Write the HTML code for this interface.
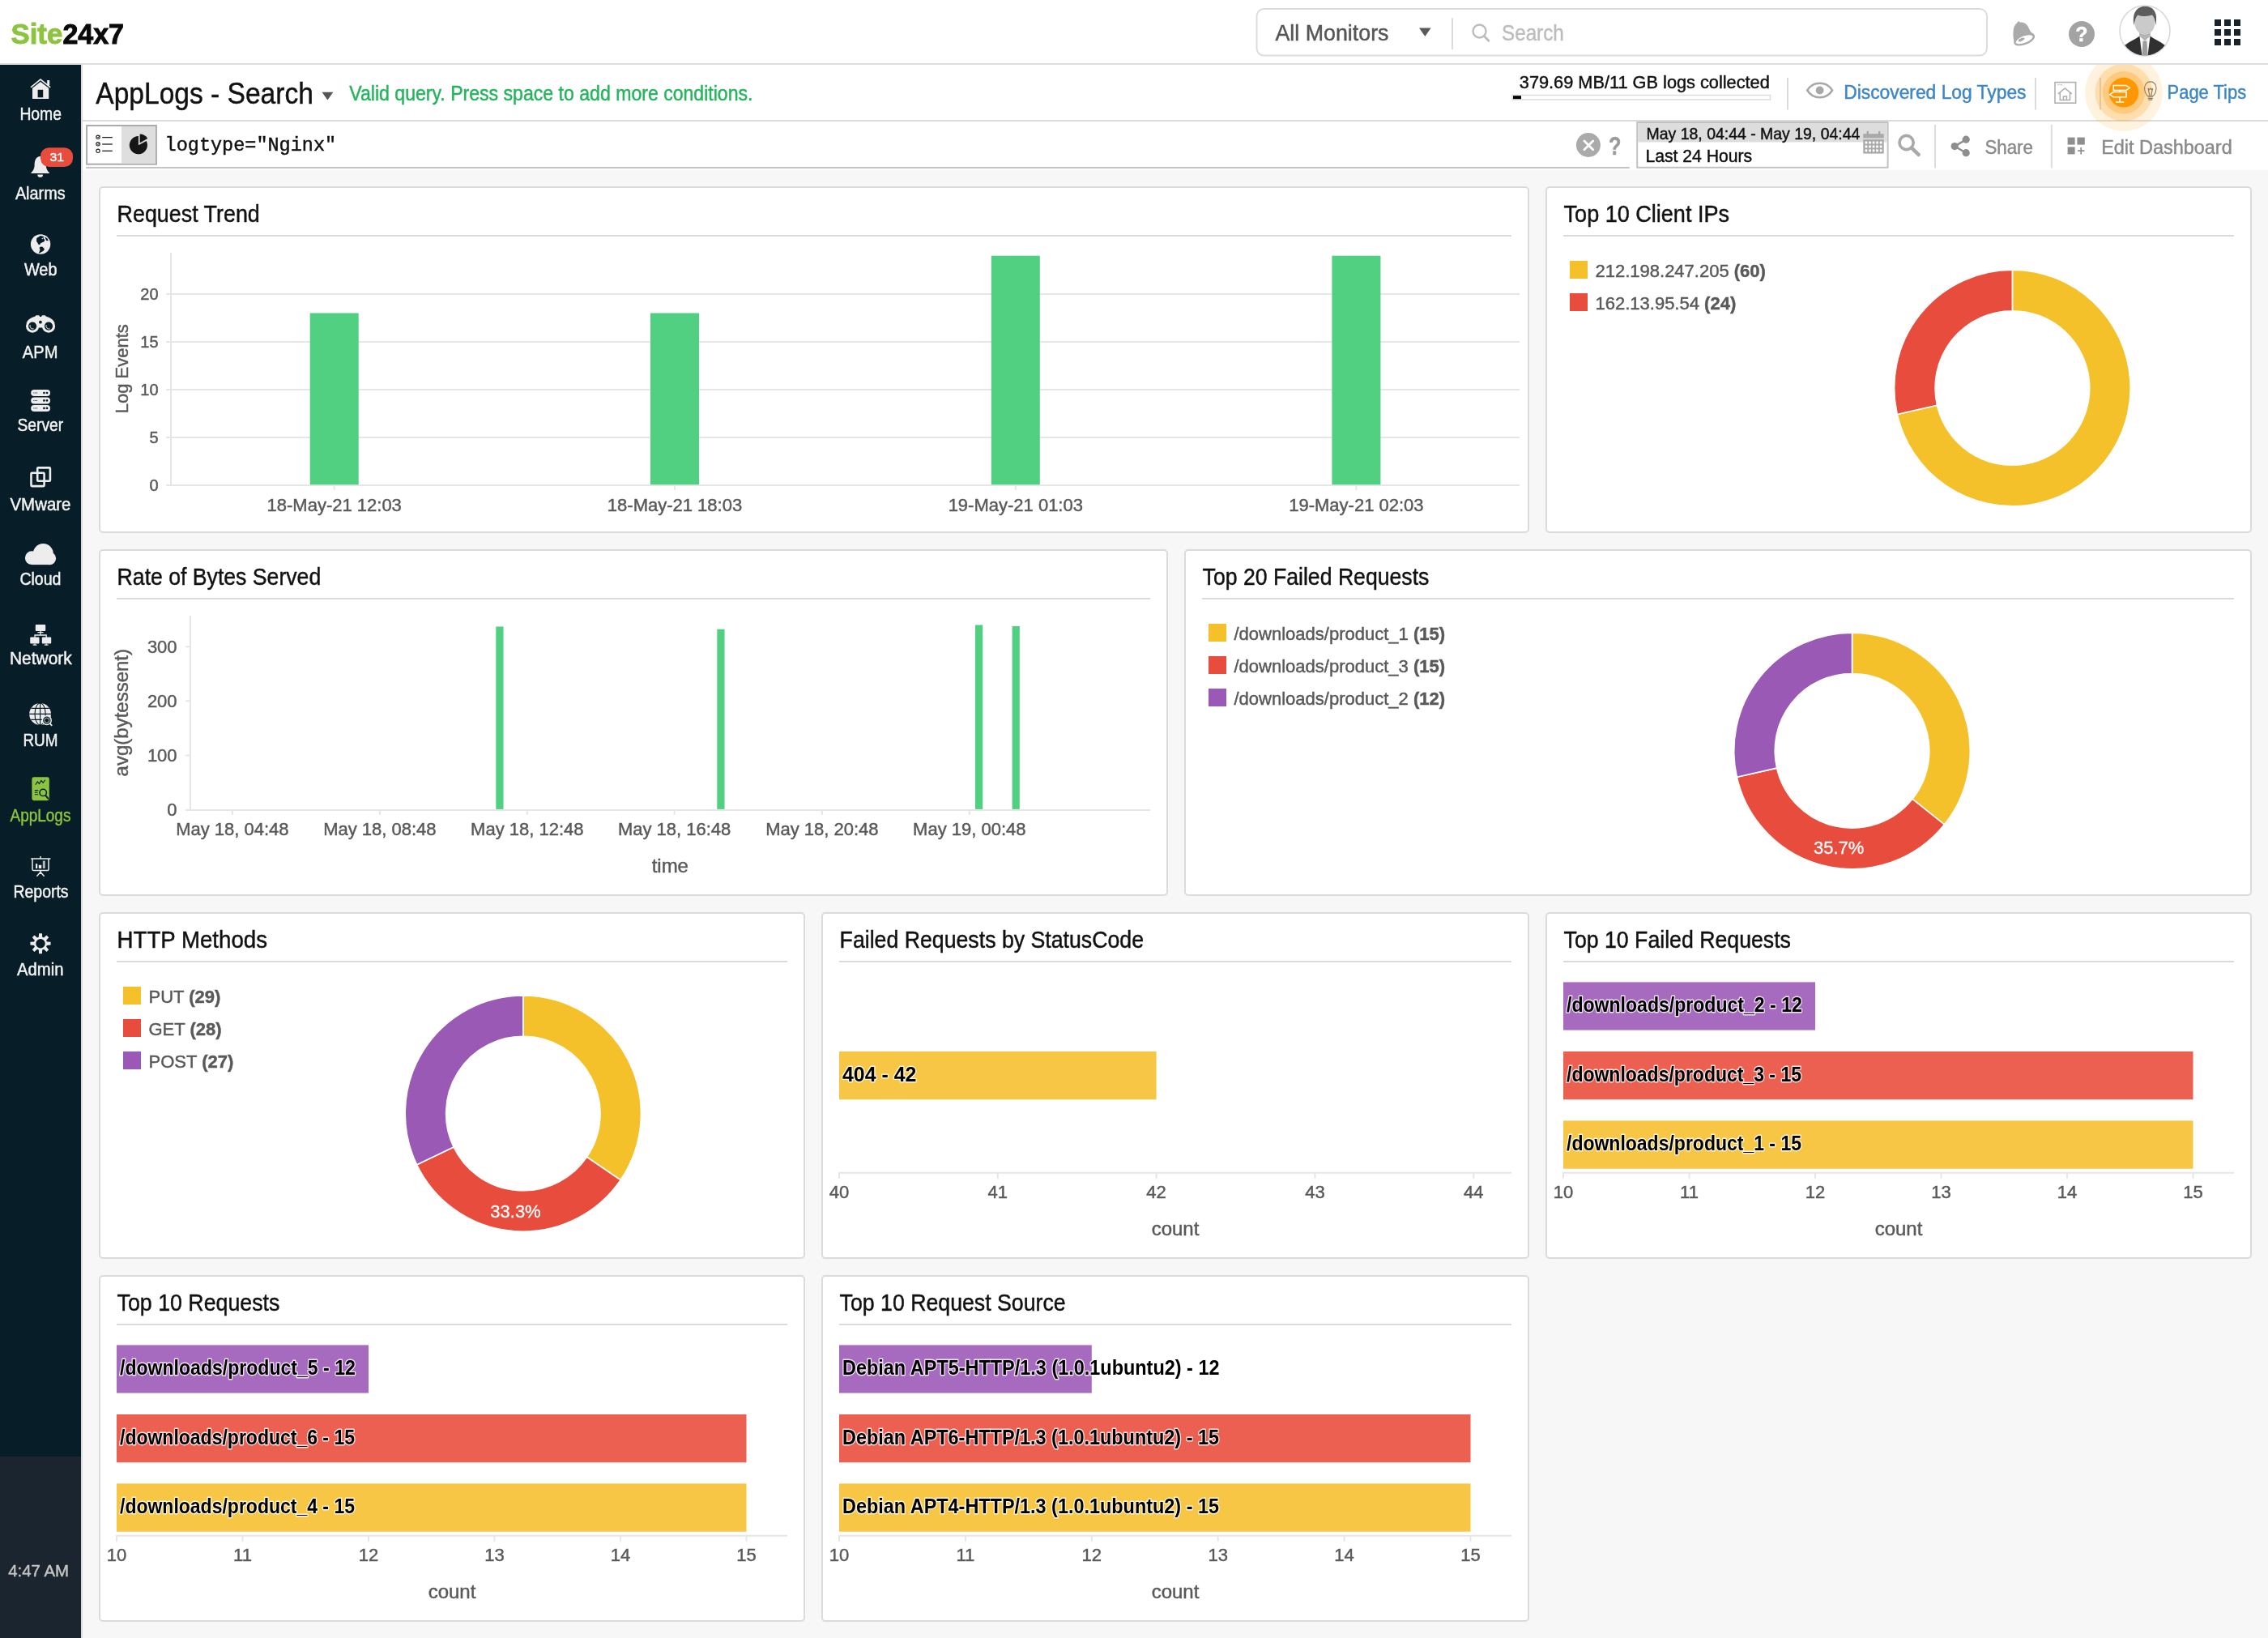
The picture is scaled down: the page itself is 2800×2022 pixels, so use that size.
<!DOCTYPE html>
<html lang="en"><head><meta charset="utf-8"><title>Site24x7 - AppLogs Search</title>
<style>
html,body{margin:0;padding:0;}
body{width:2800px;height:2022px;background:#f7f7f7;position:relative;overflow:hidden;font-family:"Liberation Sans", sans-serif;}
#boxes div{position:absolute;box-sizing:content-box;}
#ov{position:absolute;left:0;top:0;will-change:transform;}
#ov text{font-family:"Liberation Sans", sans-serif;white-space:pre;}
</style></head><body>
<div id="boxes">
<div style="left:0px;top:0px;width:2800px;height:78px;background:#fff;border-bottom:2px solid #dedede;"></div>
<div style="left:0px;top:80px;width:100px;height:1718px;background:#071d27;"></div>
<div style="left:0px;top:1798px;width:100px;height:224px;background:#1b252f;"></div>
<div style="left:100px;top:80px;width:2700px;height:68px;background:#fff;border-bottom:2px solid #dbdbdb;"></div>
<div style="left:100px;top:150px;width:2700px;height:60px;background:#fff;"></div>
<div style="left:100px;top:80px;width:2px;height:1942px;background:#dcdcdc;"></div>
<div style="left:122px;top:230px;width:1762px;height:424px;background:#fff;border:2px solid #dbdbdb;border-radius:5px;"></div>
<div style="left:1908px;top:230px;width:868px;height:424px;background:#fff;border:2px solid #dbdbdb;border-radius:5px;"></div>
<div style="left:122px;top:678px;width:1316px;height:424px;background:#fff;border:2px solid #dbdbdb;border-radius:5px;"></div>
<div style="left:1462px;top:678px;width:1314px;height:424px;background:#fff;border:2px solid #dbdbdb;border-radius:5px;"></div>
<div style="left:122px;top:1126px;width:868px;height:424px;background:#fff;border:2px solid #dbdbdb;border-radius:5px;"></div>
<div style="left:1014px;top:1126px;width:870px;height:424px;background:#fff;border:2px solid #dbdbdb;border-radius:5px;"></div>
<div style="left:1908px;top:1126px;width:868px;height:424px;background:#fff;border:2px solid #dbdbdb;border-radius:5px;"></div>
<div style="left:122px;top:1574px;width:868px;height:424px;background:#fff;border:2px solid #dbdbdb;border-radius:5px;"></div>
<div style="left:1014px;top:1574px;width:870px;height:424px;background:#fff;border:2px solid #dbdbdb;border-radius:5px;"></div>
</div>
<svg id="ov" width="2800" height="2022" viewBox="0 0 2800 2022">
<text x="144.6" y="273.9" font-size="29" fill="#111" textLength="176.2" lengthAdjust="spacingAndGlyphs" stroke="#111" stroke-width="0.45">Request Trend</text>
<line x1="144.0" y1="291.0" x2="1866.0" y2="291.0" stroke="#dbdbdb" stroke-width="2" />
<text x="1930.6" y="273.9" font-size="29" fill="#111" textLength="204.4" lengthAdjust="spacingAndGlyphs" stroke="#111" stroke-width="0.45">Top 10 Client IPs</text>
<line x1="1930.0" y1="291.0" x2="2758.0" y2="291.0" stroke="#dbdbdb" stroke-width="2" />
<text x="144.6" y="721.9" font-size="29" fill="#111" textLength="251.6" lengthAdjust="spacingAndGlyphs" stroke="#111" stroke-width="0.45">Rate of Bytes Served</text>
<line x1="144.0" y1="739.0" x2="1420.0" y2="739.0" stroke="#dbdbdb" stroke-width="2" />
<text x="1484.6" y="721.9" font-size="29" fill="#111" textLength="279.8" lengthAdjust="spacingAndGlyphs" stroke="#111" stroke-width="0.45">Top 20 Failed Requests</text>
<line x1="1484.0" y1="739.0" x2="2758.0" y2="739.0" stroke="#dbdbdb" stroke-width="2" />
<text x="144.6" y="1169.9" font-size="29" fill="#111" textLength="185.4" lengthAdjust="spacingAndGlyphs" stroke="#111" stroke-width="0.45">HTTP Methods</text>
<line x1="144.0" y1="1187.0" x2="972.0" y2="1187.0" stroke="#dbdbdb" stroke-width="2" />
<text x="1036.6" y="1169.9" font-size="29" fill="#111" textLength="375.4" lengthAdjust="spacingAndGlyphs" stroke="#111" stroke-width="0.45">Failed Requests by StatusCode</text>
<line x1="1036.0" y1="1187.0" x2="1866.0" y2="1187.0" stroke="#dbdbdb" stroke-width="2" />
<text x="1930.6" y="1169.9" font-size="29" fill="#111" textLength="280.3" lengthAdjust="spacingAndGlyphs" stroke="#111" stroke-width="0.45">Top 10 Failed Requests</text>
<line x1="1930.0" y1="1187.0" x2="2758.0" y2="1187.0" stroke="#dbdbdb" stroke-width="2" />
<text x="144.6" y="1617.9" font-size="29" fill="#111" textLength="200.8" lengthAdjust="spacingAndGlyphs" stroke="#111" stroke-width="0.45">Top 10 Requests</text>
<line x1="144.0" y1="1635.0" x2="972.0" y2="1635.0" stroke="#dbdbdb" stroke-width="2" />
<text x="1036.6" y="1617.9" font-size="29" fill="#111" textLength="279.0" lengthAdjust="spacingAndGlyphs" stroke="#111" stroke-width="0.45">Top 10 Request Source</text>
<line x1="1036.0" y1="1635.0" x2="1866.0" y2="1635.0" stroke="#dbdbdb" stroke-width="2" />
<line x1="205.0" y1="599.1" x2="1876.0" y2="599.1" stroke="#e6e6e6" stroke-width="2" />
<text x="195.6" y="606.2" font-size="20" fill="#595959" text-anchor="end" stroke="#595959" stroke-width="0.45">0</text>
<line x1="205.0" y1="540.1" x2="1876.0" y2="540.1" stroke="#e6e6e6" stroke-width="2" />
<text x="195.6" y="547.2" font-size="20" fill="#595959" text-anchor="end" stroke="#595959" stroke-width="0.45">5</text>
<line x1="205.0" y1="481.0" x2="1876.0" y2="481.0" stroke="#e6e6e6" stroke-width="2" />
<text x="195.6" y="488.1" font-size="20" fill="#595959" text-anchor="end" stroke="#595959" stroke-width="0.45">10</text>
<line x1="205.0" y1="422.0" x2="1876.0" y2="422.0" stroke="#e6e6e6" stroke-width="2" />
<text x="195.6" y="429.1" font-size="20" fill="#595959" text-anchor="end" stroke="#595959" stroke-width="0.45">15</text>
<line x1="205.0" y1="362.9" x2="1876.0" y2="362.9" stroke="#e6e6e6" stroke-width="2" />
<text x="195.6" y="370.0" font-size="20" fill="#595959" text-anchor="end" stroke="#595959" stroke-width="0.45">20</text>
<line x1="211.0" y1="312.0" x2="211.0" y2="600.1" stroke="#e6e6e6" stroke-width="2" />
<rect x="382.7" y="386.5" width="60.0" height="211.7" fill="#50d080" />
<line x1="412.7" y1="600.0" x2="412.7" y2="605.0" stroke="#e6e6e6" stroke-width="2" />
<text x="412.7" y="631.1" font-size="22" fill="#595959" text-anchor="middle" stroke="#595959" stroke-width="0.45">18-May-21 12:03</text>
<rect x="803.0" y="386.5" width="60.0" height="211.7" fill="#50d080" />
<line x1="833.0" y1="600.0" x2="833.0" y2="605.0" stroke="#e6e6e6" stroke-width="2" />
<text x="833.0" y="631.1" font-size="22" fill="#595959" text-anchor="middle" stroke="#595959" stroke-width="0.45">18-May-21 18:03</text>
<rect x="1223.8" y="315.7" width="60.0" height="282.5" fill="#50d080" />
<line x1="1253.8" y1="600.0" x2="1253.8" y2="605.0" stroke="#e6e6e6" stroke-width="2" />
<text x="1253.8" y="631.1" font-size="22" fill="#595959" text-anchor="middle" stroke="#595959" stroke-width="0.45">19-May-21 01:03</text>
<rect x="1644.4" y="315.7" width="60.0" height="282.5" fill="#50d080" />
<line x1="1674.4" y1="600.0" x2="1674.4" y2="605.0" stroke="#e6e6e6" stroke-width="2" />
<text x="1674.4" y="631.1" font-size="22" fill="#595959" text-anchor="middle" stroke="#595959" stroke-width="0.45">19-May-21 02:03</text>
<text transform="translate(158.3 455.3) rotate(-90)" font-size="22" fill="#595959" stroke="#595959" stroke-width="0.45" text-anchor="middle">Log Events</text>
<rect x="1938.0" y="322.0" width="22.0" height="22.0" fill="#f5c12a" />
<text x="1969.5" y="341.5" font-size="22" fill="#595959" stroke="#595959" stroke-width="0.45">212.198.247.205 <tspan font-weight="bold">(60)</tspan></text>
<rect x="1938.0" y="362.0" width="22.0" height="22.0" fill="#e74c3c" />
<text x="1969.5" y="381.5" font-size="22" fill="#595959" stroke="#595959" stroke-width="0.45">162.13.95.54 <tspan font-weight="bold">(24)</tspan></text>
<path d="M2484.40 333.20A145.8 145.8 0 1 1 2342.26 511.44L2391.49 500.21A95.3 95.3 0 1 0 2484.40 383.70Z" fill="#f5c12a" stroke="#fff" stroke-width="1.6" stroke-linejoin="round"/>
<path d="M2342.26 511.44A145.8 145.8 0 0 1 2484.40 333.20L2484.40 383.70A95.3 95.3 0 0 0 2391.49 500.21Z" fill="#e74c3c" stroke="#fff" stroke-width="1.6" stroke-linejoin="round"/>
<line x1="234.9" y1="760.0" x2="234.9" y2="1000.8" stroke="#e6e6e6" stroke-width="2" />
<line x1="229.2" y1="999.9" x2="1420.0" y2="999.9" stroke="#e6e6e6" stroke-width="2" />
<line x1="229.2" y1="999.9" x2="234.9" y2="999.9" stroke="#e6e6e6" stroke-width="2" />
<text x="218.6" y="1007.3" font-size="22" fill="#595959" text-anchor="end" stroke="#595959" stroke-width="0.45">0</text>
<line x1="229.2" y1="932.5" x2="234.9" y2="932.5" stroke="#e6e6e6" stroke-width="2" />
<text x="218.6" y="939.9" font-size="22" fill="#595959" text-anchor="end" stroke="#595959" stroke-width="0.45">100</text>
<line x1="229.2" y1="865.3" x2="234.9" y2="865.3" stroke="#e6e6e6" stroke-width="2" />
<text x="218.6" y="872.7" font-size="22" fill="#595959" text-anchor="end" stroke="#595959" stroke-width="0.45">200</text>
<line x1="229.2" y1="798.3" x2="234.9" y2="798.3" stroke="#e6e6e6" stroke-width="2" />
<text x="218.6" y="805.7" font-size="22" fill="#595959" text-anchor="end" stroke="#595959" stroke-width="0.45">300</text>
<line x1="286.9" y1="1000.8" x2="286.9" y2="1005.8" stroke="#e6e6e6" stroke-width="2" />
<text x="286.9" y="1031.2" font-size="22" fill="#595959" text-anchor="middle" stroke="#595959" stroke-width="0.45">May 18, 04:48</text>
<line x1="468.9" y1="1000.8" x2="468.9" y2="1005.8" stroke="#e6e6e6" stroke-width="2" />
<text x="468.9" y="1031.2" font-size="22" fill="#595959" text-anchor="middle" stroke="#595959" stroke-width="0.45">May 18, 08:48</text>
<line x1="650.8" y1="1000.8" x2="650.8" y2="1005.8" stroke="#e6e6e6" stroke-width="2" />
<text x="650.8" y="1031.2" font-size="22" fill="#595959" text-anchor="middle" stroke="#595959" stroke-width="0.45">May 18, 12:48</text>
<line x1="832.6" y1="1000.8" x2="832.6" y2="1005.8" stroke="#e6e6e6" stroke-width="2" />
<text x="832.6" y="1031.2" font-size="22" fill="#595959" text-anchor="middle" stroke="#595959" stroke-width="0.45">May 18, 16:48</text>
<line x1="1014.9" y1="1000.8" x2="1014.9" y2="1005.8" stroke="#e6e6e6" stroke-width="2" />
<text x="1014.9" y="1031.2" font-size="22" fill="#595959" text-anchor="middle" stroke="#595959" stroke-width="0.45">May 18, 20:48</text>
<line x1="1196.8" y1="1000.8" x2="1196.8" y2="1005.8" stroke="#e6e6e6" stroke-width="2" />
<text x="1196.8" y="1031.2" font-size="22" fill="#595959" text-anchor="middle" stroke="#595959" stroke-width="0.45">May 19, 00:48</text>
<rect x="612.3" y="773.5" width="9.2" height="225.4" fill="#50d080" />
<rect x="885.3" y="776.7" width="9.2" height="222.2" fill="#50d080" />
<rect x="1204.0" y="771.5" width="9.2" height="227.4" fill="#50d080" />
<rect x="1249.6" y="773.0" width="9.2" height="225.9" fill="#50d080" />
<text x="827.3" y="1076.7" font-size="24" fill="#595959" text-anchor="middle" stroke="#595959" stroke-width="0.45">time</text>
<text transform="translate(158.3 879.7) rotate(-90)" font-size="24" fill="#595959" stroke="#595959" stroke-width="0.45" text-anchor="middle">avg(bytessent)</text>
<rect x="1492.0" y="770.0" width="22.0" height="22.0" fill="#f5c12a" />
<text x="1523.5" y="789.5" font-size="22" fill="#595959" stroke="#595959" stroke-width="0.45">/downloads/product_1 <tspan font-weight="bold">(15)</tspan></text>
<rect x="1492.0" y="810.0" width="22.0" height="22.0" fill="#e74c3c" />
<text x="1523.5" y="829.5" font-size="22" fill="#595959" stroke="#595959" stroke-width="0.45">/downloads/product_3 <tspan font-weight="bold">(15)</tspan></text>
<rect x="1492.0" y="850.0" width="22.0" height="22.0" fill="#9b59b6" />
<text x="1523.5" y="869.5" font-size="22" fill="#595959" stroke="#595959" stroke-width="0.45">/downloads/product_2 <tspan font-weight="bold">(12)</tspan></text>
<path d="M2286.50 781.10A145.8 145.8 0 0 1 2400.49 1017.80L2361.01 986.32A95.3 95.3 0 0 0 2286.50 831.60Z" fill="#f5c12a" stroke="#fff" stroke-width="1.6" stroke-linejoin="round"/>
<path d="M2400.49 1017.80A145.8 145.8 0 0 1 2144.36 959.34L2193.59 948.11A95.3 95.3 0 0 0 2361.01 986.32Z" fill="#e74c3c" stroke="#fff" stroke-width="1.6" stroke-linejoin="round"/>
<path d="M2144.36 959.34A145.8 145.8 0 0 1 2286.50 781.10L2286.50 831.60A95.3 95.3 0 0 0 2193.59 948.11Z" fill="#9b59b6" stroke="#fff" stroke-width="1.6" stroke-linejoin="round"/>
<text x="2270.2" y="1053.8" font-size="22" fill="#fff" text-anchor="middle" stroke="#fff" stroke-width="0.3">35.7%</text>
<rect x="152.0" y="1218.0" width="22.0" height="22.0" fill="#f5c12a" />
<text x="183.5" y="1237.5" font-size="22" fill="#595959" stroke="#595959" stroke-width="0.45">PUT <tspan font-weight="bold">(29)</tspan></text>
<rect x="152.0" y="1258.0" width="22.0" height="22.0" fill="#e74c3c" />
<text x="183.5" y="1277.5" font-size="22" fill="#595959" stroke="#595959" stroke-width="0.45">GET <tspan font-weight="bold">(28)</tspan></text>
<rect x="152.0" y="1298.0" width="22.0" height="22.0" fill="#9b59b6" />
<text x="183.5" y="1317.5" font-size="22" fill="#595959" stroke="#595959" stroke-width="0.45">POST <tspan font-weight="bold">(27)</tspan></text>
<path d="M645.80 1229.00A145.6 145.6 0 0 1 766.10 1456.62L724.46 1428.23A95.2 95.2 0 0 0 645.80 1279.40Z" fill="#f5c12a" stroke="#fff" stroke-width="1.6" stroke-linejoin="round"/>
<path d="M766.10 1456.62A145.6 145.6 0 0 1 514.62 1437.77L560.03 1415.91A95.2 95.2 0 0 0 724.46 1428.23Z" fill="#e74c3c" stroke="#fff" stroke-width="1.6" stroke-linejoin="round"/>
<path d="M514.62 1437.77A145.6 145.6 0 0 1 645.80 1229.00L645.80 1279.40A95.2 95.2 0 0 0 560.03 1415.91Z" fill="#9b59b6" stroke="#fff" stroke-width="1.6" stroke-linejoin="round"/>
<text x="636.5" y="1503.0" font-size="22" fill="#fff" text-anchor="middle" stroke="#fff" stroke-width="0.3">33.3%</text>
<rect x="1036.0" y="1298.0" width="391.6" height="59.3" fill="#f6c644" />
<line x1="1035.0" y1="1447.7" x2="1866.0" y2="1447.7" stroke="#e6e6e6" stroke-width="2" />
<line x1="1036.0" y1="1447.7" x2="1036.0" y2="1454.7" stroke="#e6e6e6" stroke-width="2" />
<text x="1036.0" y="1479.3" font-size="22" fill="#595959" text-anchor="middle" stroke="#595959" stroke-width="0.45">40</text>
<line x1="1231.8" y1="1447.7" x2="1231.8" y2="1454.7" stroke="#e6e6e6" stroke-width="2" />
<text x="1231.8" y="1479.3" font-size="22" fill="#595959" text-anchor="middle" stroke="#595959" stroke-width="0.45">41</text>
<line x1="1427.6" y1="1447.7" x2="1427.6" y2="1454.7" stroke="#e6e6e6" stroke-width="2" />
<text x="1427.6" y="1479.3" font-size="22" fill="#595959" text-anchor="middle" stroke="#595959" stroke-width="0.45">42</text>
<line x1="1623.4" y1="1447.7" x2="1623.4" y2="1454.7" stroke="#e6e6e6" stroke-width="2" />
<text x="1623.4" y="1479.3" font-size="22" fill="#595959" text-anchor="middle" stroke="#595959" stroke-width="0.45">43</text>
<line x1="1819.2" y1="1447.7" x2="1819.2" y2="1454.7" stroke="#e6e6e6" stroke-width="2" />
<text x="1819.2" y="1479.3" font-size="22" fill="#595959" text-anchor="middle" stroke="#595959" stroke-width="0.45">44</text>
<text x="1451.0" y="1525.3" font-size="24" fill="#595959" text-anchor="middle" stroke="#595959" stroke-width="0.45">count</text>
<text x="1040.0" y="1335.0" font-size="25" fill="#000" font-weight="bold" textLength="91.5" lengthAdjust="spacingAndGlyphs" stroke="#fff" stroke-width="2.8" stroke-opacity="0.8" stroke-linejoin="round" paint-order="stroke">404 - 42</text>
<rect x="1930.0" y="1212.4" width="311.0" height="59.2" fill="#a66bbe" />
<rect x="1930.0" y="1298.0" width="777.5" height="59.3" fill="#eb6051" />
<rect x="1930.0" y="1383.4" width="777.5" height="59.3" fill="#f6c644" />
<line x1="1929.0" y1="1447.7" x2="2758.0" y2="1447.7" stroke="#e6e6e6" stroke-width="2" />
<line x1="1930.0" y1="1447.7" x2="1930.0" y2="1454.7" stroke="#e6e6e6" stroke-width="2" />
<text x="1930.0" y="1479.3" font-size="22" fill="#595959" text-anchor="middle" stroke="#595959" stroke-width="0.45">10</text>
<line x1="2085.5" y1="1447.7" x2="2085.5" y2="1454.7" stroke="#e6e6e6" stroke-width="2" />
<text x="2085.5" y="1479.3" font-size="22" fill="#595959" text-anchor="middle" stroke="#595959" stroke-width="0.45">11</text>
<line x1="2241.0" y1="1447.7" x2="2241.0" y2="1454.7" stroke="#e6e6e6" stroke-width="2" />
<text x="2241.0" y="1479.3" font-size="22" fill="#595959" text-anchor="middle" stroke="#595959" stroke-width="0.45">12</text>
<line x1="2396.5" y1="1447.7" x2="2396.5" y2="1454.7" stroke="#e6e6e6" stroke-width="2" />
<text x="2396.5" y="1479.3" font-size="22" fill="#595959" text-anchor="middle" stroke="#595959" stroke-width="0.45">13</text>
<line x1="2552.0" y1="1447.7" x2="2552.0" y2="1454.7" stroke="#e6e6e6" stroke-width="2" />
<text x="2552.0" y="1479.3" font-size="22" fill="#595959" text-anchor="middle" stroke="#595959" stroke-width="0.45">14</text>
<line x1="2707.5" y1="1447.7" x2="2707.5" y2="1454.7" stroke="#e6e6e6" stroke-width="2" />
<text x="2707.5" y="1479.3" font-size="22" fill="#595959" text-anchor="middle" stroke="#595959" stroke-width="0.45">15</text>
<text x="2344.0" y="1525.3" font-size="24" fill="#595959" text-anchor="middle" stroke="#595959" stroke-width="0.45">count</text>
<text x="1934.0" y="1249.4" font-size="25" fill="#000" font-weight="bold" textLength="290.8" lengthAdjust="spacingAndGlyphs" stroke="#fff" stroke-width="2.8" stroke-opacity="0.8" stroke-linejoin="round" paint-order="stroke">/downloads/product_2 - 12</text>
<text x="1934.0" y="1335.0" font-size="25" fill="#000" font-weight="bold" textLength="290.0" lengthAdjust="spacingAndGlyphs" stroke="#fff" stroke-width="2.8" stroke-opacity="0.8" stroke-linejoin="round" paint-order="stroke">/downloads/product_3 - 15</text>
<text x="1934.0" y="1420.4" font-size="25" fill="#000" font-weight="bold" textLength="290.0" lengthAdjust="spacingAndGlyphs" stroke="#fff" stroke-width="2.8" stroke-opacity="0.8" stroke-linejoin="round" paint-order="stroke">/downloads/product_1 - 15</text>
<rect x="144.0" y="1660.4" width="311.0" height="59.2" fill="#a66bbe" />
<rect x="144.0" y="1746.0" width="777.5" height="59.3" fill="#eb6051" />
<rect x="144.0" y="1831.4" width="777.5" height="59.3" fill="#f6c644" />
<line x1="143.0" y1="1895.7" x2="972.0" y2="1895.7" stroke="#e6e6e6" stroke-width="2" />
<line x1="144.0" y1="1895.7" x2="144.0" y2="1902.7" stroke="#e6e6e6" stroke-width="2" />
<text x="144.0" y="1927.3" font-size="22" fill="#595959" text-anchor="middle" stroke="#595959" stroke-width="0.45">10</text>
<line x1="299.5" y1="1895.7" x2="299.5" y2="1902.7" stroke="#e6e6e6" stroke-width="2" />
<text x="299.5" y="1927.3" font-size="22" fill="#595959" text-anchor="middle" stroke="#595959" stroke-width="0.45">11</text>
<line x1="455.0" y1="1895.7" x2="455.0" y2="1902.7" stroke="#e6e6e6" stroke-width="2" />
<text x="455.0" y="1927.3" font-size="22" fill="#595959" text-anchor="middle" stroke="#595959" stroke-width="0.45">12</text>
<line x1="610.5" y1="1895.7" x2="610.5" y2="1902.7" stroke="#e6e6e6" stroke-width="2" />
<text x="610.5" y="1927.3" font-size="22" fill="#595959" text-anchor="middle" stroke="#595959" stroke-width="0.45">13</text>
<line x1="766.0" y1="1895.7" x2="766.0" y2="1902.7" stroke="#e6e6e6" stroke-width="2" />
<text x="766.0" y="1927.3" font-size="22" fill="#595959" text-anchor="middle" stroke="#595959" stroke-width="0.45">14</text>
<line x1="921.5" y1="1895.7" x2="921.5" y2="1902.7" stroke="#e6e6e6" stroke-width="2" />
<text x="921.5" y="1927.3" font-size="22" fill="#595959" text-anchor="middle" stroke="#595959" stroke-width="0.45">15</text>
<text x="558.0" y="1973.3" font-size="24" fill="#595959" text-anchor="middle" stroke="#595959" stroke-width="0.45">count</text>
<text x="148.0" y="1697.4" font-size="25" fill="#000" font-weight="bold" textLength="290.8" lengthAdjust="spacingAndGlyphs" stroke="#fff" stroke-width="2.8" stroke-opacity="0.8" stroke-linejoin="round" paint-order="stroke">/downloads/product_5 - 12</text>
<text x="148.0" y="1783.0" font-size="25" fill="#000" font-weight="bold" textLength="290.0" lengthAdjust="spacingAndGlyphs" stroke="#fff" stroke-width="2.8" stroke-opacity="0.8" stroke-linejoin="round" paint-order="stroke">/downloads/product_6 - 15</text>
<text x="148.0" y="1868.4" font-size="25" fill="#000" font-weight="bold" textLength="290.0" lengthAdjust="spacingAndGlyphs" stroke="#fff" stroke-width="2.8" stroke-opacity="0.8" stroke-linejoin="round" paint-order="stroke">/downloads/product_4 - 15</text>
<rect x="1036.0" y="1660.4" width="311.8" height="59.2" fill="#a66bbe" />
<rect x="1036.0" y="1746.0" width="779.5" height="59.3" fill="#eb6051" />
<rect x="1036.0" y="1831.4" width="779.5" height="59.3" fill="#f6c644" />
<line x1="1035.0" y1="1895.7" x2="1866.0" y2="1895.7" stroke="#e6e6e6" stroke-width="2" />
<line x1="1036.0" y1="1895.7" x2="1036.0" y2="1902.7" stroke="#e6e6e6" stroke-width="2" />
<text x="1036.0" y="1927.3" font-size="22" fill="#595959" text-anchor="middle" stroke="#595959" stroke-width="0.45">10</text>
<line x1="1191.9" y1="1895.7" x2="1191.9" y2="1902.7" stroke="#e6e6e6" stroke-width="2" />
<text x="1191.9" y="1927.3" font-size="22" fill="#595959" text-anchor="middle" stroke="#595959" stroke-width="0.45">11</text>
<line x1="1347.8" y1="1895.7" x2="1347.8" y2="1902.7" stroke="#e6e6e6" stroke-width="2" />
<text x="1347.8" y="1927.3" font-size="22" fill="#595959" text-anchor="middle" stroke="#595959" stroke-width="0.45">12</text>
<line x1="1503.7" y1="1895.7" x2="1503.7" y2="1902.7" stroke="#e6e6e6" stroke-width="2" />
<text x="1503.7" y="1927.3" font-size="22" fill="#595959" text-anchor="middle" stroke="#595959" stroke-width="0.45">13</text>
<line x1="1659.6" y1="1895.7" x2="1659.6" y2="1902.7" stroke="#e6e6e6" stroke-width="2" />
<text x="1659.6" y="1927.3" font-size="22" fill="#595959" text-anchor="middle" stroke="#595959" stroke-width="0.45">14</text>
<line x1="1815.5" y1="1895.7" x2="1815.5" y2="1902.7" stroke="#e6e6e6" stroke-width="2" />
<text x="1815.5" y="1927.3" font-size="22" fill="#595959" text-anchor="middle" stroke="#595959" stroke-width="0.45">15</text>
<text x="1451.0" y="1973.3" font-size="24" fill="#595959" text-anchor="middle" stroke="#595959" stroke-width="0.45">count</text>
<text x="1040.0" y="1697.4" font-size="25" fill="#000" font-weight="bold" textLength="465.5" lengthAdjust="spacingAndGlyphs" stroke="#fff" stroke-width="2.8" stroke-opacity="0.8" stroke-linejoin="round" paint-order="stroke">Debian APT5-HTTP/1.3 (1.0.1ubuntu2) - 12</text>
<text x="1040.0" y="1783.0" font-size="25" fill="#000" font-weight="bold" textLength="465.0" lengthAdjust="spacingAndGlyphs" stroke="#fff" stroke-width="2.8" stroke-opacity="0.8" stroke-linejoin="round" paint-order="stroke">Debian APT6-HTTP/1.3 (1.0.1ubuntu2) - 15</text>
<text x="1040.0" y="1868.4" font-size="25" fill="#000" font-weight="bold" textLength="465.0" lengthAdjust="spacingAndGlyphs" stroke="#fff" stroke-width="2.8" stroke-opacity="0.8" stroke-linejoin="round" paint-order="stroke">Debian APT4-HTTP/1.3 (1.0.1ubuntu2) - 15</text>
<text x="13.6" y="53.7" font-size="34.6" fill="#8cc43f" font-weight="bold" textLength="63.6" lengthAdjust="spacingAndGlyphs" stroke="#8cc43f" stroke-width="1.0">Site</text>
<text x="77.4" y="53.7" font-size="34.6" fill="#0a0a0a" font-weight="bold" textLength="75.6" lengthAdjust="spacingAndGlyphs" stroke="#0a0a0a" stroke-width="1.0">24x7</text>
<rect x="1551.5" y="11" width="901.5" height="57.6" rx="9" fill="#fff" stroke="#dcdcdc" stroke-width="2"/>
<text x="1574.5" y="50.0" font-size="27.2" fill="#555" textLength="140.0" lengthAdjust="spacingAndGlyphs" stroke="#555" stroke-width="0.45">All Monitors</text>
<path d="M1752 34.5h14.6l-7.3 10.6z" fill="#5a5a5a"/>
<line x1="1793.0" y1="22.0" x2="1793.0" y2="61.0" stroke="#dcdcdc" stroke-width="2" />
<circle cx="1826.5" cy="38.5" r="8" fill="none" stroke="#bdbdbd" stroke-width="2.4"/>
<path d="M1832.5 44.8L1837.8 50.2" stroke="#bdbdbd" stroke-width="3" stroke-linecap="round"/>
<text x="1854.0" y="50.0" font-size="27.2" fill="#bdbdbd" textLength="76.8" lengthAdjust="spacingAndGlyphs" stroke="#bdbdbd" stroke-width="0.45">Search</text>
<path d="M2486.4 51C2485.2 45.5 2485.3 40 2485.8 36.5C2486.3 32.6 2488 29.8 2490.3 28.2L2491 26.8Q2491.9 25.7 2492.9 26.7L2493.6 27.4C2496 27.3 2497.6 27.6 2498.9 28.2C2502 29.6 2503.6 32.4 2504.6 34.4C2506 37.4 2506.9 39.7 2509.4 41L2512.2 44L2499 50Z" fill="#aaaaaa"/><ellipse cx="2499.1" cy="48.7" rx="12.4" ry="5.4" transform="rotate(-21 2499.1 48.7)" fill="#fff" stroke="#aaaaaa" stroke-width="2.4"/><ellipse cx="2495.6" cy="48.9" rx="4.1" ry="1.7" transform="rotate(-26 2495.6 48.9)" fill="#aaaaaa"/>
<circle cx="2570" cy="42" r="16" fill="#a3a3a3"/>
<text x="2570.0" y="51.2" font-size="25" fill="#fff" font-weight="bold" text-anchor="middle" stroke="#fff" stroke-width="0.45">?</text>
<defs><clipPath id="avc"><circle cx="2648" cy="38" r="30.5"/></clipPath></defs>
<circle cx="2648" cy="38" r="31" fill="#fff" stroke="#d9d9d9" stroke-width="1.6"/>
<g clip-path="url(#avc)"><path d="M2618 74L2621.5 57.5C2626 52.5 2634.5 49.5 2641.6 44.4L2648 46L2654.4 44.4C2661.5 49.5 2670 52.5 2674.5 57.5L2678 74Z" fill="#303030"/><path d="M2641.4 44L2644.6 69.5h6.8L2654.6 44Z" fill="#f6f6f6"/><path d="M2645.6 50.4h4.8l1.2 19h-7.2z" fill="#9c9c9c"/><path d="M2641.2 36h13.6v8.2l-6.8 6.2l-6.8 -6.2z" fill="#b4b4b4"/><ellipse cx="2647.9" cy="28.4" rx="12.4" ry="14.4" fill="#cacaca"/><path d="M2634.6 31.5C2631.8 17 2637.5 7.8 2648.4 7.8C2659.3 7.8 2664.6 17 2661.2 31.5C2660.8 25.5 2659.6 21.5 2657 18.6C2651.5 20.6 2643.5 20.2 2639.2 18.4C2636.6 21.5 2635.2 25.5 2634.6 31.5Z" fill="#5c5c5c"/></g>
<rect x="2734.0" y="24.0" width="8.0" height="8.0" fill="#16232d" />
<rect x="2746.0" y="24.0" width="8.0" height="8.0" fill="#16232d" />
<rect x="2758.0" y="24.0" width="8.0" height="8.0" fill="#16232d" />
<rect x="2734.0" y="36.0" width="8.0" height="8.0" fill="#16232d" />
<rect x="2746.0" y="36.0" width="8.0" height="8.0" fill="#16232d" />
<rect x="2758.0" y="36.0" width="8.0" height="8.0" fill="#16232d" />
<rect x="2734.0" y="48.0" width="8.0" height="8.0" fill="#16232d" />
<rect x="2746.0" y="48.0" width="8.0" height="8.0" fill="#16232d" />
<rect x="2758.0" y="48.0" width="8.0" height="8.0" fill="#16232d" />
<text x="118.3" y="127.8" font-size="37.4" fill="#111" textLength="268.6" lengthAdjust="spacingAndGlyphs" stroke="#111" stroke-width="0.45">AppLogs - Search</text>
<path d="M397.5 113.8h13.8l-6.9 9.6z" fill="#555"/>
<text x="431.3" y="123.7" font-size="24.9" fill="#24b45c" textLength="498.2" lengthAdjust="spacingAndGlyphs" stroke="#24b45c" stroke-width="0.45">Valid query. Press space to add more conditions.</text>
<text x="1875.8" y="109.2" font-size="21.2" fill="#111" textLength="309.0" lengthAdjust="spacingAndGlyphs" stroke="#111" stroke-width="0.45">379.69 MB/11 GB logs collected</text>
<rect x="1867" y="117.5" width="318.5" height="5.5" fill="#fff" stroke="#dcdcdc" stroke-width="1.5"/>
<rect x="1868.0" y="118.2" width="10.0" height="4.0" fill="#000" />
<line x1="2207.0" y1="96.0" x2="2207.0" y2="135.5" stroke="#dcdcdc" stroke-width="2" />
<line x1="2513.0" y1="96.0" x2="2513.0" y2="135.5" stroke="#dcdcdc" stroke-width="2" />
<line x1="2593.0" y1="96.0" x2="2593.0" y2="135.5" stroke="#dcdcdc" stroke-width="2" />
<path d="M2231.2 111.5C2238.4 99.8 2254.9 99.8 2262.1 111.5C2254.9 123.2 2238.4 123.2 2231.2 111.5Z" fill="none" stroke="#a8a8a8" stroke-width="2.5"/>
<circle cx="2246.6" cy="111.5" r="4.9" fill="#a8a8a8"/>
<text x="2276.2" y="121.6" font-size="24.8" fill="#3b86c6" textLength="225.3" lengthAdjust="spacingAndGlyphs" stroke="#3b86c6" stroke-width="0.45">Discovered Log Types</text>
<rect x="2537" y="101.6" width="25.6" height="25.6" fill="none" stroke="#b0b0b0" stroke-width="1.6"/>
<path d="M2540.8 115.8L2549.3 109L2557.8 115.8M2543.3 114.4v9h12.2v-9M2547.4 123.4v-4.5h4v4.5" fill="none" stroke="#adadad" stroke-width="1.5"/>
<path d="M2540.3 104.6h1.2M2542.6 104.6h1.2M2544.9 104.6h1.2" stroke="#b0b0b0" stroke-width="1.2"/>
<defs><clipPath id="tipc"><rect x="2500" y="80" width="300" height="140"/></clipPath></defs>
<g clip-path="url(#tipc)"><circle cx="2621.9" cy="114.2" r="47.8" fill="#ff9800" fill-opacity="0.13"/><circle cx="2621.9" cy="114.2" r="35.5" fill="#ff9800" fill-opacity="0.22"/><circle cx="2621.9" cy="114.2" r="26.2" fill="#ff9800" fill-opacity="0.28"/><circle cx="2621.9" cy="114.2" r="18.4" fill="#ff9800"/><path d="M2609.3 105.4h15.4l4.6 3.1l-4.6 3.1h-15.4zM2604.6 116.7l4.6 -3.1h15.8v6.2h-15.8zM2617.1 111.6v2M2617.1 119.8v5.8M2612 126.1h10.2" fill="none" stroke="#fff" stroke-width="1.5"/></g>
<path d="M2651 118.2C2648.5 115.5 2647.6 113 2647.6 108.6C2647.6 104 2650.6 100.9 2654.8 100.9C2659 100.9 2662 104 2662 108.6C2662 113 2661.1 115.5 2658.6 118.2ZM2651.6 119.8h6.4M2651.8 121.6h6M2652.4 123.3h4.8M2652 109l1.8 8.6M2657.6 109l-1.8 8.6M2652 109l1.4 1.6l1.4 -1.6l1.4 1.6l1.4 -1.6" fill="none" stroke="#8c7a62" stroke-width="1.1"/>
<text x="2675.6" y="121.9" font-size="24.8" fill="#3b86c6" textLength="97.5" lengthAdjust="spacingAndGlyphs" stroke="#3b86c6" stroke-width="0.45">Page Tips</text>
<line x1="106.0" y1="207.0" x2="2011.8" y2="207.0" stroke="#c4c4c4" stroke-width="2" />
<rect x="107.1" y="155" width="85.8" height="47.7" fill="#fff" stroke="#ababab" stroke-width="2"/>
<rect x="150.0" y="156.0" width="41.9" height="45.7" fill="#dedede" />
<line x1="126.2" y1="169.6" x2="138.8" y2="169.6" stroke="#222" stroke-width="1.3" />
<line x1="126.2" y1="178.0" x2="138.8" y2="178.0" stroke="#222" stroke-width="1.3" />
<line x1="126.2" y1="186.3" x2="138.8" y2="186.3" stroke="#222" stroke-width="1.3" />
<circle cx="121" cy="169.3" r="2.2" fill="none" stroke="#222" stroke-width="1.1"/><circle cx="121" cy="177.8" r="2.2" fill="none" stroke="#222" stroke-width="1.1"/><circle cx="121" cy="186.3" r="2.2" fill="none" stroke="#222" stroke-width="1.1"/><path d="M120 169.2l0.9 0.9l2.3 -2.6M120 177.7l0.9 0.9l2.3 -2.6" fill="none" stroke="#222" stroke-width="1"/>
<path d="M170.9 168.1A11.1 11.1 0 1 0 180.7 174L170.9 179.2Z" fill="#161616"/><path d="M172.6 165.6A11 11 0 0 1 182.2 171.1L172.6 176.4Z" fill="#161616"/>
<text x="203.6" y="185.8" font-size="23.6" fill="#111" textLength="211.5" lengthAdjust="spacingAndGlyphs" style='font-family:"Liberation Mono", monospace' stroke="#111" stroke-width="0.45">logtype=&quot;Nginx&quot;</text>
<circle cx="1960.9" cy="179" r="15" fill="#aaaaaa"/><path d="M1955.9 173.9l10.8 10.8M1966.7 173.9l-10.8 10.8" stroke="#fff" stroke-width="2.8" stroke-linecap="round"/>
<text x="1993.8" y="191.2" font-size="31.5" fill="#9b9b9b" font-weight="bold" text-anchor="middle" textLength="15.5" lengthAdjust="spacingAndGlyphs" stroke="#9b9b9b" stroke-width="0.45">?</text>
<rect x="2021.2" y="151" width="309.4" height="55.8" fill="#fff" stroke="#c2c2c2" stroke-width="2"/>
<rect x="2022.2" y="152.0" width="307.4" height="23.5" fill="#dddddd" />
<text x="2032.6" y="172.1" font-size="20.4" fill="#111" textLength="263.7" lengthAdjust="spacingAndGlyphs" stroke="#111" stroke-width="0.45">May 18, 04:44 - May 19, 04:44</text>
<text x="2031.4" y="199.6" font-size="21.2" fill="#111" textLength="131.7" lengthAdjust="spacingAndGlyphs" stroke="#111" stroke-width="0.45">Last 24 Hours</text>
<rect x="2300.3" y="165.2" width="25.4" height="5.2" fill="#a9a9a9" />
<rect x="2304.6" y="161.9" width="2.4" height="5.0" fill="#a9a9a9" />
<rect x="2319.0" y="161.9" width="2.4" height="5.0" fill="#a9a9a9" />
<rect x="2300.3" y="172.2" width="25.4" height="17.4" fill="#a9a9a9" />
<rect x="2302.6" y="174.6" width="2.7" height="2.9" fill="#fff" />
<rect x="2307.2" y="174.6" width="2.7" height="2.9" fill="#fff" />
<rect x="2311.7" y="174.6" width="2.7" height="2.9" fill="#fff" />
<rect x="2316.2" y="174.6" width="2.7" height="2.9" fill="#fff" />
<rect x="2320.8" y="174.6" width="2.7" height="2.9" fill="#fff" />
<rect x="2302.6" y="179.5" width="2.7" height="2.9" fill="#fff" />
<rect x="2307.2" y="179.5" width="2.7" height="2.9" fill="#fff" />
<rect x="2311.7" y="179.5" width="2.7" height="2.9" fill="#fff" />
<rect x="2316.2" y="179.5" width="2.7" height="2.9" fill="#fff" />
<rect x="2320.8" y="179.5" width="2.7" height="2.9" fill="#fff" />
<rect x="2302.6" y="184.4" width="2.7" height="2.9" fill="#fff" />
<rect x="2307.2" y="184.4" width="2.7" height="2.9" fill="#fff" />
<rect x="2311.7" y="184.4" width="2.7" height="2.9" fill="#fff" />
<rect x="2316.2" y="184.4" width="2.7" height="2.9" fill="#fff" />
<rect x="2320.8" y="184.4" width="2.7" height="2.9" fill="#fff" />
<circle cx="2353.6" cy="176" r="8.6" fill="none" stroke="#a9a9a9" stroke-width="3.6"/><path d="M2360.6 183.2L2368.6 190.8" stroke="#a9a9a9" stroke-width="4.6" stroke-linecap="round"/>
<line x1="2389.0" y1="154.0" x2="2389.0" y2="207.6" stroke="#dcdcdc" stroke-width="2" />
<line x1="2532.8" y1="154.0" x2="2532.8" y2="207.6" stroke="#dcdcdc" stroke-width="2" />
<path d="M2427.2 172.2L2413.2 180.6L2427.2 188.7" fill="none" stroke="#8e8e8e" stroke-width="2.4"/><circle cx="2427.2" cy="172.2" r="4.6" fill="#8e8e8e"/><circle cx="2413.2" cy="180.6" r="4.6" fill="#8e8e8e"/><circle cx="2427.2" cy="188.7" r="4.6" fill="#8e8e8e"/>
<text x="2450.4" y="189.7" font-size="24.8" fill="#8a8a8a" textLength="59.5" lengthAdjust="spacingAndGlyphs" stroke="#8a8a8a" stroke-width="0.45">Share</text>
<rect x="2552.6" y="169.6" width="9.0" height="9.0" fill="#8e8e8e" />
<rect x="2564.4" y="169.6" width="9.4" height="9.0" fill="#8e8e8e" />
<rect x="2552.6" y="181.4" width="9.0" height="9.0" fill="#8e8e8e" />
<path d="M2565 186.2h8.4M2569.2 182v8.4" stroke="#8e8e8e" stroke-width="1.7"/>
<text x="2594.2" y="189.7" font-size="24.8" fill="#8a8a8a" textLength="161.5" lengthAdjust="spacingAndGlyphs" stroke="#8a8a8a" stroke-width="0.45">Edit Dashboard</text>
<text x="24.4" y="147.8" font-size="21.3" fill="#f4f4f4" textLength="51.6" lengthAdjust="spacingAndGlyphs" stroke="#f4f4f4" stroke-width="0.45">Home</text>
<text x="18.9" y="246.1" font-size="21.3" fill="#f4f4f4" textLength="61.7" lengthAdjust="spacingAndGlyphs" stroke="#f4f4f4" stroke-width="0.45">Alarms</text>
<text x="29.9" y="339.5" font-size="21.3" fill="#f4f4f4" textLength="40.6" lengthAdjust="spacingAndGlyphs" stroke="#f4f4f4" stroke-width="0.45">Web</text>
<text x="27.8" y="441.5" font-size="21.3" fill="#f4f4f4" textLength="43.6" lengthAdjust="spacingAndGlyphs" stroke="#f4f4f4" stroke-width="0.45">APM</text>
<text x="21.4" y="531.8" font-size="21.3" fill="#f4f4f4" textLength="56.8" lengthAdjust="spacingAndGlyphs" stroke="#f4f4f4" stroke-width="0.45">Server</text>
<text x="12.5" y="629.6" font-size="21.3" fill="#f4f4f4" textLength="74.9" lengthAdjust="spacingAndGlyphs" stroke="#f4f4f4" stroke-width="0.45">VMware</text>
<text x="24.4" y="721.5" font-size="21.3" fill="#f4f4f4" textLength="51.1" lengthAdjust="spacingAndGlyphs" stroke="#f4f4f4" stroke-width="0.45">Cloud</text>
<text x="11.9" y="819.9" font-size="21.3" fill="#f4f4f4" textLength="76.9" lengthAdjust="spacingAndGlyphs" stroke="#f4f4f4" stroke-width="0.45">Network</text>
<text x="28.4" y="921.1" font-size="21.3" fill="#f4f4f4" textLength="43.0" lengthAdjust="spacingAndGlyphs" stroke="#f4f4f4" stroke-width="0.45">RUM</text>
<text x="12.5" y="1013.7" font-size="21.3" fill="#8cc43f" textLength="74.9" lengthAdjust="spacingAndGlyphs" stroke="#8cc43f" stroke-width="0.45">AppLogs</text>
<text x="16.5" y="1107.7" font-size="21.3" fill="#f4f4f4" textLength="68.1" lengthAdjust="spacingAndGlyphs" stroke="#f4f4f4" stroke-width="0.45">Reports</text>
<text x="21.1" y="1203.8" font-size="21.3" fill="#f4f4f4" textLength="57.3" lengthAdjust="spacingAndGlyphs" stroke="#f4f4f4" stroke-width="0.45">Admin</text>
<text x="10.2" y="1945.7" font-size="20.8" fill="#c4c4c4" textLength="74.9" lengthAdjust="spacingAndGlyphs" stroke="#c4c4c4" stroke-width="0.45">4:47 AM</text>
<path d="M38 107.9L50 98.1L62.2 107.9" fill="none" stroke="#ededed" stroke-width="1.7"/><rect x="58.2" y="99" width="3" height="6.4" fill="#ededed"/><path d="M40 122V108.7L50 100.9L60.2 108.7V122Z" fill="#ededed"/><rect x="46.6" y="110.8" width="6.6" height="9.5" fill="#071d27"/>
<path d="M49.7 193C44.4 193 42.6 198.4 42.6 203.6C42.6 208.6 40.6 211.4 38 213.9H61.4C58.8 211.4 56.8 208.6 56.8 203.6C56.8 198.4 55 193 49.7 193Z" fill="#ededed"/><path d="M46.3 215.4a3.4 3.4 0 0 0 6.8 0Z" fill="#ededed"/>
<rect x="50" y="182.2" width="40" height="23.8" rx="10.5" fill="#e74c3c"/>
<text x="70.2" y="199.2" font-size="15.5" fill="#fff" text-anchor="middle" textLength="17.6" lengthAdjust="spacingAndGlyphs" stroke="#fff" stroke-width="0.45">31</text>
<circle cx="50.1" cy="301.5" r="12.2" fill="#ededed"/><path d="M45.2 294.1L49.9 291.1L54.2 292L53.3 294.1L55.5 296.2L54.2 298.4L52.1 299.2L49.9 300.5L49.1 302.2L47.4 301.8L46.1 299.2L45 297.9Z" fill="#071d27"/><path d="M55 292.2L58.6 294.5L59.8 297.2L57.2 297.1L56.3 295Z" fill="#071d27"/><path d="M49.9 304.4L52.5 304.8L55 307.4L53.3 309.9L50.8 311.2L48.6 312.8L48.2 311.6L49.5 308.6L48.6 306.1Z" fill="#071d27"/><path d="M51.2 294.8l1.6 -1.2l0.2 1.6z" fill="#ededed"/>
<path d="M32.6 399C34.6 393.4 40.6 391.6 43.4 390.6L44.6 389.3h3.6l1 1.7h1.8l1 -1.7h3.6L56.8 390.6C59.6 391.6 65.6 393.4 67.6 399L60 402.6L52.4 404.4H47.8L40.2 402.6Z" fill="#ededed"/><circle cx="40.1" cy="402.6" r="8.1" fill="#ededed"/><circle cx="60" cy="402.6" r="8.1" fill="#ededed"/><circle cx="40.1" cy="402.6" r="5.1" fill="#071d27"/><circle cx="60" cy="402.6" r="5.1" fill="#071d27"/><path d="M37.2 401.2A3.6 3.6 0 0 0 41.6 405.9M57.1 401.2A3.6 3.6 0 0 0 61.5 405.9" fill="none" stroke="#ededed" stroke-width="1"/><circle cx="49.9" cy="397.7" r="1.9" fill="#071d27"/>
<rect x="38.2" y="481.0" width="23.8" height="8" rx="4" fill="#ededed"/><circle cx="54.4" cy="485.0" r="1.35" fill="#071d27"/><circle cx="58" cy="485.0" r="1.35" fill="#071d27"/><path d="M41.4 485.0h4.6" stroke="#071d27" stroke-width="1" stroke-dasharray="1 0.8"/>
<rect x="38.2" y="490.4" width="23.8" height="8" rx="4" fill="#ededed"/><circle cx="54.4" cy="494.4" r="1.35" fill="#071d27"/><circle cx="58" cy="494.4" r="1.35" fill="#071d27"/><path d="M41.4 494.4h4.6" stroke="#071d27" stroke-width="1" stroke-dasharray="1 0.8"/>
<rect x="38.2" y="499.9" width="23.8" height="8" rx="4" fill="#ededed"/><circle cx="54.4" cy="503.9" r="1.35" fill="#071d27"/><circle cx="58" cy="503.9" r="1.35" fill="#071d27"/><path d="M41.4 503.9h4.6" stroke="#071d27" stroke-width="1" stroke-dasharray="1 0.8"/>
<rect x="46.2" y="577.4" width="15.7" height="16.3" rx="1" fill="none" stroke="#ededed" stroke-width="2.6"/><rect x="38.5" y="583.8" width="16.1" height="16.3" rx="1" fill="none" stroke="#ededed" stroke-width="2.6"/>
<g fill="#ededed"><circle cx="39.3" cy="688.7" r="8.4"/><circle cx="53.3" cy="683.6" r="12.5"/><circle cx="61.2" cy="689.3" r="7.9"/><rect x="39" y="686" width="22.4" height="11.1"/></g>
<g fill="#ededed"><rect x="43.8" y="771" width="12.4" height="8" rx="1"/><rect x="37.2" y="786.6" width="11.3" height="8" rx="1"/><rect x="51.8" y="786.6" width="11.4" height="8" rx="1"/></g><path d="M50 779v5M43 787v-3h14.2v3M40.6 796.2h4.8M54.8 796.2h4.8M43 794.6v1.6M57.2 794.6v1.6M46.4 780.6h7.2" fill="none" stroke="#ededed" stroke-width="1.3"/>
<circle cx="49.6" cy="881.4" r="13.4" fill="#ededed"/><path d="M49.6 868v26.8M36.2 881.4h26.8M38.4 874.4h22.4M38.4 888.4h22.4" stroke="#071d27" stroke-width="1.1" fill="none"/><ellipse cx="49.6" cy="881.4" rx="6.6" ry="13.4" fill="none" stroke="#071d27" stroke-width="1.1"/><circle cx="57.8" cy="889.2" r="5.4" fill="#071d27" stroke="#ededed" stroke-width="1.5"/><circle cx="57.8" cy="889.2" r="3" fill="none" stroke="#ededed" stroke-width="0.8"/><path d="M61.6 893L64.2 895.8" stroke="#ededed" stroke-width="1.8"/>
<rect x="39.4" y="959.3" width="21.4" height="28.9" rx="2.4" fill="#8cc43f"/><path d="M43.8 968.6l2.6 -3.6l2 2.6l2.6 -4.2l2.2 3l2.6 -3.6" fill="none" stroke="#071d27" stroke-width="1.1"/><path d="M42.8 975.6h4.4M42.8 978.2h3.6M42.8 980.8h4.4" stroke="#071d27" stroke-width="1.1"/><circle cx="53.2" cy="978.4" r="4.2" fill="none" stroke="#071d27" stroke-width="1.5"/><path d="M56.2 981.8L60 986.4" stroke="#071d27" stroke-width="1.9"/>
<path d="M38.2 1060h24.2M50 1057v3M40 1060v13a1.6 1.6 0 0 0 1.6 1.6h16.8a1.6 1.6 0 0 0 1.6 -1.6v-13M50 1074.6v4.4M50 1076.4l-4.6 5.4M50 1076.4l4.6 5.4" fill="none" stroke="#ededed" stroke-width="1.5"/><rect x="44" y="1066.2" width="2.2" height="5.8" fill="#ededed"/><rect x="47.8" y="1067.8" width="3.4" height="4.2" fill="#ededed"/><rect x="52.8" y="1062.6" width="3" height="9.4" fill="#ededed" fill-opacity="0.75"/>
<path d="M48.10 1152.14L51.90 1152.14L52.19 1156.80L54.04 1157.57L57.54 1154.48L60.22 1157.16L57.13 1160.66L57.90 1162.51L62.56 1162.80L62.56 1166.60L57.90 1166.89L57.13 1168.74L60.22 1172.24L57.54 1174.92L54.04 1171.83L52.19 1172.60L51.90 1177.26L48.10 1177.26L47.81 1172.60L45.96 1171.83L42.46 1174.92L39.78 1172.24L42.87 1168.74L42.10 1166.89L37.44 1166.60L37.44 1162.80L42.10 1162.51L42.87 1160.66L39.78 1157.16L42.46 1154.48L45.96 1157.57L47.81 1156.80Z" fill="#ededed"/><circle cx="50.0" cy="1164.7" r="5.7" fill="#071d27"/>
</svg>
</body></html>
